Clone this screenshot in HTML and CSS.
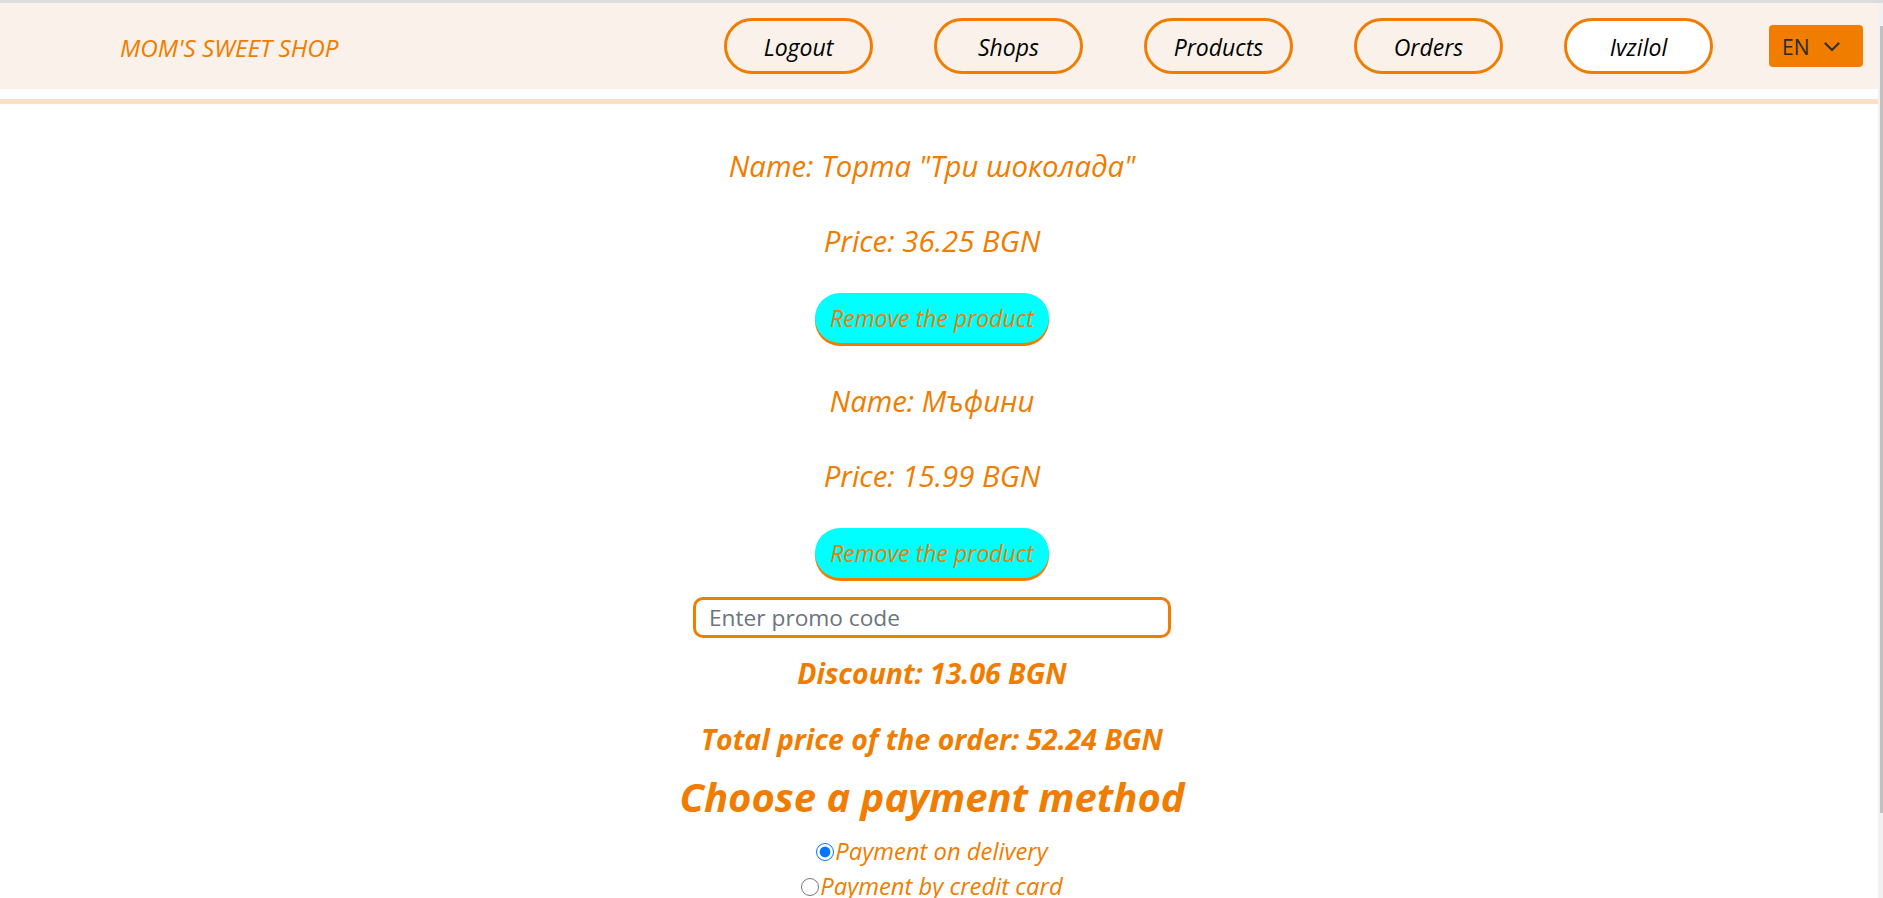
FILE: index.html
```html
<!DOCTYPE html>
<html lang="en">
<head>
<meta charset="utf-8">
<title>Mom's Sweet Shop – Cart</title>
<link rel="stylesheet" href="styles.css">
</head>
<body>
<div class="viewport">
  <div class="page">
    <header class="topbar">
      <a class="brand" href="#">MOM'S SWEET SHOP</a>
      <nav class="nav">
        <a class="nav-btn" href="#">Logout</a>
        <a class="nav-btn" href="#">Shops</a>
        <a class="nav-btn" href="#">Products</a>
        <a class="nav-btn" href="#">Orders</a>
        <a class="nav-btn nav-btn--user" href="#">Ivzilol</a>
      </nav>
      <div class="lang">
        <span class="lang__label">EN</span>
        <svg class="lang__chevron" width="16" height="10" viewBox="0 0 16 10"><polyline points="1.5,1.5 8,8 14.5,1.5" fill="none" stroke="#333" stroke-width="2.2" stroke-linecap="round" stroke-linejoin="round"/></svg>
      </div>
    </header>
    <div class="divider"></div>
    <main class="cart">
      <section class="product">
        <p class="line line--name">Name: Торта "Три шоколада"</p>
        <p class="line">Price: 36.25 BGN</p>
        <button class="remove" type="button">Remove the product</button>
      </section>
      <section class="product">
        <p class="line line--name">Name: Мъфини</p>
        <p class="line">Price: 15.99 BGN</p>
        <button class="remove" type="button">Remove the product</button>
      </section>
      <input class="promo" type="text" placeholder="Enter promo code">
      <p class="summary">Discount: 13.06 BGN</p>
      <p class="summary summary--total">Total price of the order: 52.24 BGN</p>
      <h2 class="pay-title">Choose a payment method</h2>
      <label class="pay-option pay-option--first"><input type="radio" name="pay" checked>Payment on delivery</label>
      <label class="pay-option"><input type="radio" name="pay">Payment by credit card</label>
    </main>
  </div>
  <div class="scrollbar"><div class="scrollbar__thumb"></div></div>
</div>
</body>
</html>
```

FILE: styles.css
```css
html, body {
  margin: 0;
  padding: 0;
  overflow: hidden;
  background: #ffffff;
  font-family: "Open Sans", "Noto Sans", sans-serif;
}

.viewport {
  display: flex;
  height: 898px;
  box-sizing: border-box;
  border-top: 3px solid #dcdcdc;
  overflow: hidden;
}

.page {
  flex: 1;
  min-width: 0;
}

.scrollbar {
  width: 5px;
  background: #f1f1f1;
  padding-top: 23px;
  box-sizing: border-box;
}

.scrollbar__thumb {
  margin-left: 2px;
  width: 3px;
  height: 787px;
  background: #c1c1c1;
}

/* Header */
.topbar {
  display: flex;
  align-items: center;
  height: 86px;
  background: #f9f1ea;
  padding: 0 15px 0 120px;
}

.brand {
  margin-top: 3px;
  color: #f07c00;
  font-style: italic;
  font-size: 24.3px;
  text-decoration: none;
}

.nav {
  margin-left: auto;
  display: flex;
  gap: 61px;
}

.nav-btn {
  width: 149px;
  height: 56px;
  box-sizing: border-box;
  padding-top: 2px;
  border: 3px solid #f07c00;
  border-radius: 28px;
  display: flex;
  align-items: center;
  justify-content: center;
  font-style: italic;
  font-size: 23px;
  color: #000000;
  text-decoration: none;
}

.nav-btn--user {
  background: #ffffff;
}

.lang {
  margin-left: 56px;
  width: 94px;
  height: 42px;
  box-sizing: border-box;
  padding: 2px 0 0 13px;
  background: #f07c00;
  border-radius: 4px;
  display: flex;
  align-items: center;
  gap: 15px;
  color: #2b2b2b;
  font-size: 21px;
}

.lang__chevron {
  display: block;
}

.divider {
  margin-top: 10px;
  height: 5px;
  background: #fbdfc5;
}

/* Cart */
.cart {
  display: flex;
  flex-direction: column;
  align-items: center;
  padding: 42px 14px 0 0;
  color: #f07c00;
}

.product {
  display: flex;
  flex-direction: column;
  align-items: center;
}

.product + .product {
  margin-top: 38px;
}

.line {
  margin: 0;
  font-style: italic;
  font-size: 29.4px;
  line-height: 40px;
}

.line--name {
  font-size: 29.3px;
}

.line + .line {
  margin-top: 35px;
}

.remove {
  margin-top: 32px;
  height: 50px;
  padding: 0 15px;
  border: 0;
  border-radius: 25px;
  background: #00ffff;
  box-shadow: 0 3px 0 #f07c00;
  color: #f07c00;
  font-family: "Open Sans", "Noto Sans", sans-serif;
  font-style: italic;
  font-size: 23px;
  line-height: 50px;
  cursor: pointer;
}

.promo {
  margin-top: 19px;
  width: 478px;
  height: 41px;
  box-sizing: border-box;
  border: 3px solid #f07c00;
  border-radius: 10px;
  padding: 0 13px;
  font-family: "Open Sans", "Noto Sans", sans-serif;
  font-size: 22.7px;
  color: #495057;
  outline: none;
}

.promo::placeholder {
  color: #6c757d;
  opacity: 1;
}

.summary {
  margin: 17px 0 0;
  font-style: italic;
  font-weight: 700;
  font-size: 28.4px;
  line-height: 36px;
}

.summary--total {
  margin-top: 30px;
}

.pay-title {
  margin: 16px 0 0;
  font-style: italic;
  font-weight: 700;
  font-size: 40px;
  line-height: 48px;
}

.pay-option {
  display: flex;
  align-items: center;
  font-style: italic;
  font-size: 23.8px;
  line-height: 35px;
}

.pay-option--first {
  margin-top: 13px;
}

.pay-option input {
  width: 18px;
  height: 18px;
  margin: 0 1px 0 0;
}
```
